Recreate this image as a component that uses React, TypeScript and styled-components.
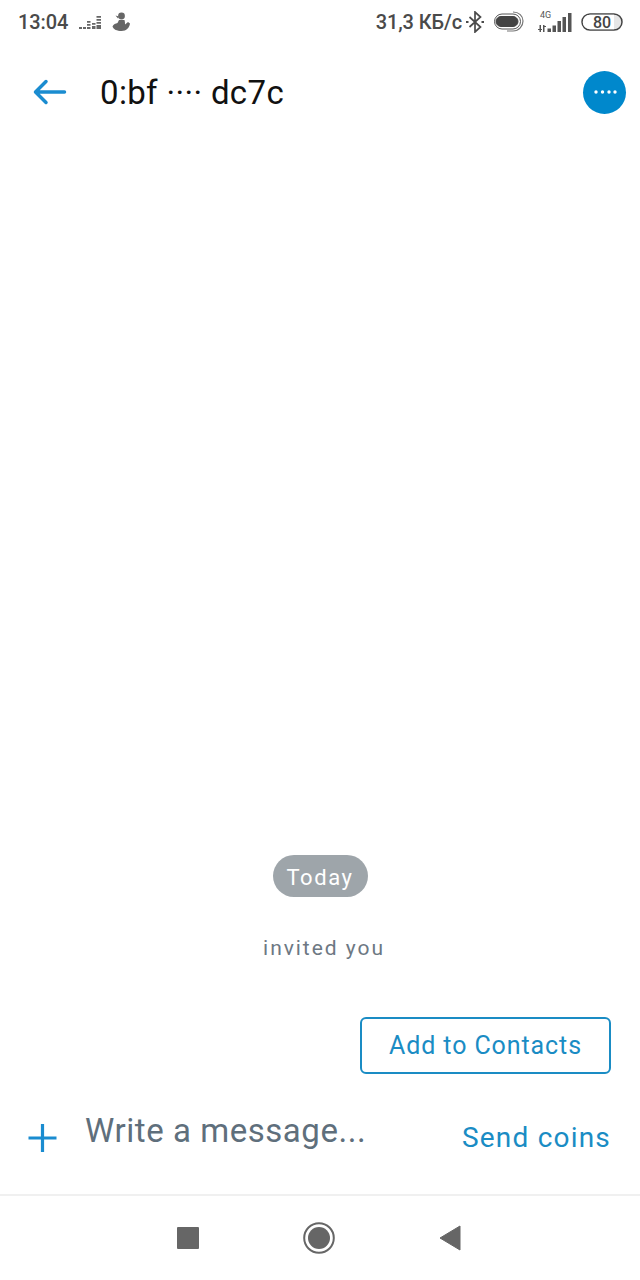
import React, { FC } from 'react';
import styled, { createGlobalStyle } from 'styled-components';

const GlobalStyle = createGlobalStyle`
	html, body {
		margin: 0;
		padding: 0;
		background: #fff;
		font-family: Roboto, "Liberation Sans", sans-serif;
	}
`;

const Screen = styled.div`
	width: 640px;
	height: 1280px;
	display: flex;
	flex-direction: column;
	overflow: hidden;
	background: #fff;
`;

const StatusBar = styled.div`
	height: 44px;
	flex: none;
	display: flex;
	align-items: center;
	justify-content: space-between;
	padding: 0 17px 0 18px;
	color: #4a4a4a;
`;

const StatusGroup = styled.div`
	display: flex;
	align-items: center;
`;

const StatusText = styled.span`
	font-size: 20px;
	font-weight: 500;
	line-height: 24px;
	letter-spacing: -0.1px;
`;

const Header = styled.header`
	height: 96px;
	flex: none;
	display: flex;
	align-items: center;
	padding: 0 14px 0 32px;
	box-sizing: border-box;
`;

const Title = styled.h1`
	flex: 1;
	margin: 0 0 0 33px;
	font-size: 33px;
	font-weight: 400;
	color: #111;
	letter-spacing: 0.35px;
`;

const MoreButton = styled.div`
	width: 43px;
	height: 43px;
	border-radius: 50%;
	background: #0088cc;
	display: flex;
	align-items: center;
	justify-content: center;
`;

const Chat = styled.main`
	flex: 1;
	display: flex;
	flex-direction: column;
	align-items: center;
	justify-content: flex-end;
`;

const DatePill = styled.div`
	width: 95px;
	height: 42px;
	border-radius: 21px;
	background: #9ea5aa;
	color: #fff;
	font-size: 22px;
	letter-spacing: 1.6px;
	line-height: 45px;
	text-align: center;
`;

const SystemNote = styled.div`
	margin: 38px 0 0 8px;
	font-size: 21px;
	line-height: 26px;
	letter-spacing: 1.95px;
	color: #6d7883;
`;

const ContactsButton = styled.button`
	align-self: flex-end;
	width: 251px;
	height: 57px;
	margin: 56px 29px 0 0;
	border: 2px solid #1a8cc4;
	border-radius: 6px;
	background: #fff;
	color: #1a8cc4;
	font-family: inherit;
	font-size: 25px;
	letter-spacing: 0.9px;
`;

const Composer = styled.div`
	height: 122px;
	flex: none;
	display: flex;
	align-items: center;
	padding: 7px 29px 0 28px;
	box-sizing: border-box;
	border-bottom: 2px solid #f0f0f0;
`;

const MessageHint = styled.div`
	flex: 1;
	margin: 0 0 14px 28px;
	font-size: 33px;
	letter-spacing: 0.55px;
	color: #5f6f7c;
`;

const SendCoins = styled.div`
	font-size: 28px;
	letter-spacing: 1.2px;
	color: #1a8cc4;
`;

const NavBar = styled.nav`
	height: 84px;
	flex: none;
	display: flex;
	align-items: center;
	justify-content: center;
	gap: 104px;
	padding-right: 3px;
`;

const Icon = styled.svg<{ $left?: number }>`
	display: block;
	flex: none;
	margin-left: ${(p) => p.$left ?? 0}px;
`;

const EqualizerIcon: FC = () => (
	<Icon $left={10} width="24" height="16" viewBox="0 0 24 16" fill="#666">
		<path d="M1 13h3v2H1zM5 13h3v2H5zM9 7h3.500v1.800H9zM9 10h3.500v1.800H9zM9 13h3.500v2H9zM14 9h3.500v1.800H14zM14 12h3.500v3H14zM18.500 2h4.500v1.800h-4.500zM18.500 5h4.500v1.800h-4.500zM18.500 8h4.500v1.800h-4.500zM18.500 11h4.500v4h-4.500z" />
	</Icon>
);

const MascotIcon: FC = () => (
	<Icon $left={9} width="20" height="20" viewBox="0 0 20 20" fill="#666">
		<circle cx="10.500" cy="4" r="3.400" />
		<path d="M4.500 3.500l3.500 1-1 2z" />
		<path d="M8 8h5.500c.5 1.500.5 3 .5 4.500l3-2.500 2 1.500c-.5 4-3.500 7.500-8.500 7.500-4.500 0-8-1.500-9-4.500 1-2.500 3-3 5-3.500z" />
	</Icon>
);

const BluetoothIcon: FC = () => (
	<Icon $left={4} width="18" height="22" viewBox="0 0 18 22" fill="none" stroke="#4a4a4a" strokeWidth="1.700">
		<path d="M3.500 6l11 10L9 21V1l5.500 5-11 10" />
		<path d="M0 11h2.500M15.500 11H18" strokeWidth="2" />
	</Icon>
);

const PillIcon: FC = () => (
	<Icon $left={10} width="30" height="22" viewBox="0 0 30 22" fill="none">
		<rect x="2" y="5.500" width="22" height="10" rx="5" fill="#444" stroke="#444" />
		<rect x="0.500" y="3" width="26" height="15" rx="7.500" stroke="#555" strokeWidth="1" />
		<path d="M19 1c6 0 10 4 10 9s-4 10-10 10h-6" stroke="#777" strokeWidth="1.200" />
	</Icon>
);

const SignalIcon: FC = () => (
	<Icon $left={13} width="36" height="24" viewBox="0 0 36 24" fill="#555">
		<text x="3" y="8" fontSize="9" fontFamily="Roboto, sans-serif">4G</text>
		<path d="M2.500 15h1.500v7H2.500zM1 19h4v1H1zM6 15h1.500v7H6zM6 16h3v1H6zM10.500 18.500h3.500v3.500h-3.500zM15.500 15.500h3.500v6.500h-3.500zM20.500 11h3.500v11h-3.500zM25.500 7h3.500v15h-3.500zM31 3h3.500v19H31z" />
	</Icon>
);

const BatteryIcon: FC = () => (
	<Icon $left={8} width="42" height="18" viewBox="0 0 42 18">
		<rect x="1" y="1" width="40" height="16" rx="8" fill="#e6e6e6" stroke="#444" strokeWidth="1.500" />
		<path d="M9 1.800h24v14.400H9a7.200 7.200 0 0 1 0-14.400z" fill="#fff" />
		<text x="21" y="14.500" fontSize="16" fontWeight="500" textAnchor="middle" fill="#444" fontFamily="Roboto, sans-serif">80</text>
	</Icon>
);

const App: FC = () => (
	<Screen>
		<GlobalStyle />
		<StatusBar>
			<StatusGroup>
				<StatusText>13:04</StatusText>
				<EqualizerIcon />
				<MascotIcon />
			</StatusGroup>
			<StatusGroup>
				<StatusText>31,3 КБ/с</StatusText>
				<BluetoothIcon />
				<PillIcon />
				<SignalIcon />
				<BatteryIcon />
			</StatusGroup>
		</StatusBar>
		<Header>
			<Icon $left={1} width="34" height="28" viewBox="0 0 34 28" fill="none" stroke="#1a8cd0" strokeWidth="3.500" strokeLinecap="round" strokeLinejoin="round">
				<path d="M31.500 14H3M13 3.500L2.500 14 13 24.500" />
			</Icon>
			<Title>0:bf ···· dc7c</Title>
			<MoreButton>
				<Icon width="24" height="4" viewBox="0 0 24 4" fill="#fff">
					<circle cx="3" cy="2" r="1.700" />
					<circle cx="9.500" cy="2" r="1.700" />
					<circle cx="16" cy="2" r="1.700" />
					<circle cx="22" cy="2" r="1.700" />
				</Icon>
			</MoreButton>
		</Header>
		<Chat>
			<DatePill>Today</DatePill>
			<SystemNote>invited you</SystemNote>
			<ContactsButton>Add to Contacts</ContactsButton>
		</Chat>
		<Composer>
			<Icon width="29" height="30" viewBox="0 0 29 30" stroke="#1a8cd0" strokeWidth="3.200">
				<path d="M14.500 1v28M0.500 15h28" />
			</Icon>
			<MessageHint>Write a message...</MessageHint>
			<SendCoins>Send coins</SendCoins>
		</Composer>
		<NavBar>
			<Icon width="22" height="22" viewBox="0 0 22 22" fill="#666">
				<rect x="0" y="0" width="22" height="22" rx="1" />
			</Icon>
			<Icon width="32" height="32" viewBox="0 0 32 32">
				<circle cx="16" cy="16" r="14.800" fill="none" stroke="#666" strokeWidth="2" />
				<circle cx="16" cy="16" r="11" fill="#666" />
			</Icon>
			<Icon width="22" height="26" viewBox="0 0 22 26" fill="#666">
				<path d="M21 1v24L1 13z" stroke="#666" strokeLinejoin="round" />
			</Icon>
		</NavBar>
	</Screen>
);

export default App;
